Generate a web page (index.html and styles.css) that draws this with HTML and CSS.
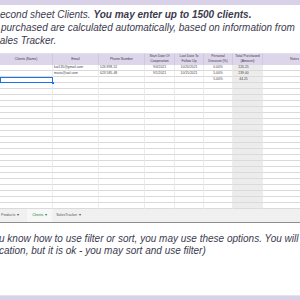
FILE: index.html
```html
<!DOCTYPE html>
<html>
<head>
    <meta charset="utf-8" />
    <title>Clients sheet</title>
    <link rel="stylesheet" href="styles.css">
</head>
<body>
<div class="band"></div>

<div class="intro">
    <p class="ln l1">second sheet Clients. <b>You may enter up to 1500 clients.</b></p>
    <p class="ln l2">purchased are calculated automatically, based on information from</p>
    <p class="ln l3">Sales Tracker.</p>
</div>

<div class="sheet">
    <div class="grid">
        <div class="hd">Clients (Name)</div>
        <div class="hd">Email</div>
        <div class="hd">Phone Number</div>
        <div class="hd">Start Date Of<br>Cooperation</div>
        <div class="hd">Last Date To<br>Follow Up</div>
        <div class="hd">Personal<br>Discount (%)</div>
        <div class="hd">Total Purchased<br>(Amount)</div>
        <div class="hd notes">Notes</div>

        <div class="c"></div><div class="c l">kat135@gmail.com</div><div class="c l">526 898-52</div><div class="c">9/4/2021</div><div class="c">10/20/2021</div><div class="c">0.00%</div><div class="c tot">220.25</div><div class="c"></div>
        <div class="c"></div><div class="c l">maria@aol.com</div><div class="c l">023 585-48</div><div class="c">9/1/2021</div><div class="c">10/15/2021</div><div class="c">5.00%</div><div class="c tot">239.00</div><div class="c"></div>
        <div class="c sel"></div><div class="c"></div><div class="c"></div><div class="c"></div><div class="c"></div><div class="c">5.00%</div><div class="c tot">44.25</div><div class="c"></div>
    </div>
    <div class="grid empty" id="empty"></div>
    <div class="tabs">
        <span class="tab">Products <i>&#9662;</i></span>
        <span class="tab on">Clients <i>&#9662;</i></span>
        <span class="tab">SalesTracker <i>&#9662;</i></span>
    </div>
</div>

<div class="outro">
    <p class="ln o1">u know how to use filter or sort, you may use these options. You will</p>
    <p class="ln o2">cation, but it is ok - you may sort and use filter)</p>
</div>

<div class="band bottom"></div>

<script type="text/javascript">
var out = [];
for (var i = 0; i < 21; i++) {
    for (var j = 0; j < 8; j++) {
        out.push("<div class='c" + (j == 6 ? " tot" : "") + "'></div>");
    }
}
document.getElementById("empty").innerHTML = out.join("");
</script>
</body>
</html>
```

FILE: styles.css
```css
body {
    margin: 0;
    width: 300px;
    height: 300px;
    overflow: hidden;
    background: #FFF;
    font-family: "Liberation Sans", Arial, sans-serif;
    color: #3c3b4e;
}
.band {
    height: 5px;
    background: #d9d1e7;
}
.band.bottom {
    margin-top: 37.5px;
    border-top: 1px solid #e6e3ea;
    height: 6px;
}
.ln {
    margin: 0;
    white-space: nowrap;
    font-size: 10px;
    font-style: italic;
    line-height: 13.3px;
}
.intro {
    padding-top: 2.9px;
    height: 45.1px;
    overflow: hidden;
}
.l1 { margin-left: -5px; }
.l2 { margin-left: 1px; }
.l3 { margin-left: -7px; }

.sheet {
    width: 330px;
}
.grid {
    display: grid;
    grid-template-columns: 53px 46px 46px 30px 29px 29px 30px 67px;
    grid-auto-rows: 6px;
    font-size: 3.4px;
    color: #444;
}
.grid:first-child {
    grid-template-rows: 12px;
}
.hd {
    height: 12px;
    background: #ddd6ea;
    border-top: 1px solid #e4e0ea;
    border-right: 1px solid #d0c8de;
    box-sizing: border-box;
    display: flex;
    align-items: center;
    justify-content: center;
    text-align: center;
    line-height: 5.2px;
    color: #3a3946;
}
.hd.notes {
    justify-content: flex-start;
    padding-left: 27px;
}
.c {
    box-sizing: border-box;
    border-bottom: 1px solid #dadada;
    border-right: 1px solid #ececec;
    display: flex;
    align-items: center;
    justify-content: center;
    line-height: 5px;
    white-space: nowrap;
}
.c.l {
    justify-content: flex-start;
    padding-left: 1px;
}
.c.tot {
    background: #ececec;
    padding-right: 8px;
}
.c.sel {
    border: 1px solid #1a73e8;
    position: relative;
}
.c.sel:after {
    content: "";
    position: absolute;
    right: -2px;
    bottom: -2px;
    width: 2px;
    height: 2px;
    background: #1a73e8;
}
.tabs {
    height: 13px;
    background: #f0f0f0;
    border-bottom: 1px solid #8e8e8e;
    display: flex;
    align-items: center;
    font-size: 3.6px;
    color: #555;
}
.tab {
    padding: 0 5px 0 1px;
    margin-right: 3px;
    height: 13px;
    display: flex;
    align-items: center;
}
.tab i {
    font-style: normal;
    margin-left: 2px;
}
.tab.on {
    color: #188038;
    background: #f7f7f7;
    padding-left: 5px;
}
.outro {
    padding-top: 10.1px;
}
.o1, .o2 {
    line-height: 12.3px;
}
.o1 { margin-left: -1px; }
.o2 { margin-left: -1px; }
```
